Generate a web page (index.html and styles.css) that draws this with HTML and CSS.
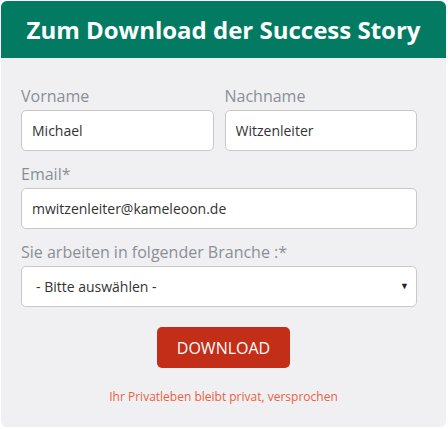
FILE: index.html
```html
<!DOCTYPE html>
<html lang="de">
  <head>
    <meta charset="UTF-8" />
    <meta name="viewport" content="width=device-width, initial-scale=1" />
    <title>Success Story Download</title>
    <link rel="stylesheet" href="styles.css">
  </head>

  <body>
    <div class="panel">
      <header class="panel-head">
        <h1>Zum Download der Success Story</h1>
      </header>

      <form class="download-form" onsubmit="return false;">
        <!-- Name row -->
        <div class="row">
          <div class="field">
            <label for="vorname">Vorname</label>
            <input type="text" id="vorname" value="Michael" />
          </div>
          <div class="field">
            <label for="nachname">Nachname</label>
            <input type="text" id="nachname" value="Witzenleiter" />
          </div>
        </div>

        <div class="field">
          <label for="email">Email*</label>
          <input type="text" id="email" value="mwitzenleiter@kameleoon.de" />
        </div>

        <div class="field">
          <label for="branche">Sie arbeiten in folgender Branche :*</label>
          <div class="select-wrap">
            <select id="branche">
              <option>- Bitte auswählen -</option>
            </select>
            <span class="arrow">&#9660;</span>
          </div>
        </div>
      </form>

      <div class="actions">
        <button class="download-button">DOWNLOAD</button>
        <p class="privacy">Ihr Privatleben bleibt privat, versprochen</p>
      </div>
    </div>
  </body>
</html>
```

FILE: styles.css
```css
/* Global Styles */
body {
  font-family: 'Open Sans', sans-serif;
  margin: 0;
  padding: 1px;
  background-color: #fff;
}

.panel {
  width: 445px;
  height: 426px;
  background-color: #f0f0f2;
  border-radius: 6px;
  overflow: hidden;
}

.panel-head {
  background-color: #027b62;
  height: 57px;
  display: flex;
  align-items: center;
  justify-content: center;
}

.panel-head h1 {
  margin: 0;
  color: white;
  font-size: 24px;
  font-weight: 700;
}

.download-form {
  padding: 27px 29px 0 20px;
}

.row {
  display: flex;
  gap: 11px;
}

.row .field {
  flex: 1;
}

.field {
  margin-bottom: 12px;
}

.field label {
  display: block;
  font-size: 16px;
  line-height: 22px;
  color: #8a8f97;
  margin-bottom: 3px;
}

.field input,
.field select {
  display: block;
  width: 100%;
  box-sizing: border-box;
  height: 41px;
  padding: 0 10px;
  font-family: 'Open Sans', sans-serif;
  font-size: 14px;
  color: #333;
  background: #fff;
  border: 1px solid #c8c8c8;
  border-radius: 5px;
  outline: none;
}

.select-wrap {
  position: relative;
}

.field select {
  appearance: none;
  -webkit-appearance: none;
  padding-left: 14px;
}

.select-wrap .arrow {
  position: absolute;
  right: 8px;
  top: 13px;
  font-size: 9px;
  color: #222;
  pointer-events: none;
}

/* Button and note */
.actions {
  display: flex;
  flex-direction: column;
  align-items: center;
  margin-top: 20px;
}

.download-button {
  width: 133px;
  height: 41px;
  background-color: #c22e17;
  color: white;
  border: none;
  border-radius: 5px;
  font-family: 'Open Sans', sans-serif;
  font-size: 16px;
}

.privacy {
  margin: 20px 0 0;
  font-size: 12px;
  color: #ec6040;
}
```
